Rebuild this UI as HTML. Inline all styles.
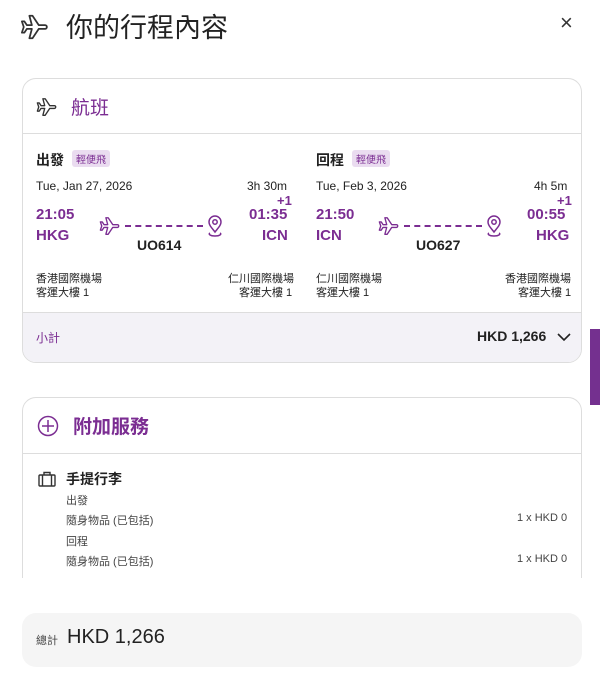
<html><head><style>
html,body{margin:0;width:600px;height:689px;overflow:hidden}
body{background:#fff;position:relative;font-family:"Liberation Sans","Noto Sans CJK TC",sans-serif;color:#222}
.a{position:absolute;white-space:nowrap}
.p{color:#7b2d92}
.card{position:absolute;left:22px;width:558px;border:1px solid #ddd;border-radius:14px;overflow:hidden;background:#fff}
.b{font-weight:bold}
</style></head><body>
<svg width="0" height="0" style="position:absolute"><defs><path id="pl" d="M20 10.5H15L10 3H7.5L9.5 10.5H5.5L3.5 7.5H1.5L3 12L1.5 16.5H3.5L5.5 13.5H9.5L7.5 21H10L15 13.5H20A1.5 1.5 0 0 0 20 10.5Z"/></defs></svg>
<svg class="a" style="left:20px;top:12px" width="30" height="30" viewBox="0 0 24 24" fill="none" stroke="#333" stroke-width="1.4" stroke-linejoin="round"><use href="#pl"/></svg>
<div class="a" style="left:66px;top:6px;font-size:27px;color:#222">你的行程內容</div>
<div class="a" style="left:560px;top:10px;font-size:22px;color:#333">×</div>

<div class="card" style="top:78px;height:283px">
<svg class="a" style="left:13px;top:17px" width="22" height="22" viewBox="0 0 24 24" fill="none" stroke="#333" stroke-width="1.5" stroke-linejoin="round"><use href="#pl"/></svg>
<div class="a p" style="left:48px;top:14px;font-size:19px">航班</div>
<div class="a" style="left:0;top:54px;width:558px;height:1px;background:#ddd"></div>

<div class="a b" style="left:13px;top:71px;font-size:14px">出發</div>
<div class="a" style="left:49px;top:71px;font-size:10px;background:#eadcf0;color:#7b2d92;padding:1px 4px;border-radius:3px">輕便飛</div>
<div class="a" style="left:13px;top:100px;font-size:12px">Tue, Jan 27, 2026</div>
<div class="a" style="left:224px;top:100px;font-size:12px">3h 30m</div>
<div class="a p b" style="left:254px;top:114px;font-size:13px">+1</div>
<div class="a p b" style="left:13px;top:127px;font-size:15px">21:05</div>
<div class="a p b" style="left:13px;top:148px;font-size:15px">HKG</div>
<div class="a p b" style="left:226px;top:127px;font-size:15px">01:35</div>
<div class="a p b" style="left:239px;top:148px;font-size:15px">ICN</div>
<svg class="a" style="left:76px;top:136px" width="22" height="22" viewBox="0 0 24 24" fill="none" stroke="#7b2d92" stroke-width="1.5" stroke-linejoin="round"><use href="#pl"/></svg>
<div class="a" style="left:102px;top:146px;width:78px;border-top:2px dashed #7b2d92"></div>
<svg class="a" style="left:183px;top:136px" width="18" height="22" viewBox="0 0 18 22" fill="none" stroke="#7b2d92" stroke-width="1.5"><path d="M9 17c-4-5-6-7-6-10a6 6 0 0112 0c0 3-2 5-6 10z"/><circle cx="9" cy="7" r="2.2"/><path d="M4 18c-2 1 0 3 5 3s7-2 5-3"/></svg>
<div class="a b" style="left:114px;top:158px;font-size:14px">UO614</div>
<div class="a" style="left:13px;top:191px;font-size:11px">香港國際機場</div>
<div class="a" style="left:13px;top:205px;font-size:11px">客運大樓 1</div>
<div class="a" style="left:205px;top:191px;font-size:11px">仁川國際機場</div>
<div class="a" style="left:216px;top:205px;font-size:11px">客運大樓 1</div>

<div class="a b" style="left:293px;top:71px;font-size:14px">回程</div>
<div class="a" style="left:329px;top:71px;font-size:10px;background:#eadcf0;color:#7b2d92;padding:1px 4px;border-radius:3px">輕便飛</div>
<div class="a" style="left:293px;top:100px;font-size:12px">Tue, Feb 3, 2026</div>
<div class="a" style="left:511px;top:100px;font-size:12px">4h 5m</div>
<div class="a p b" style="left:534px;top:114px;font-size:13px">+1</div>
<div class="a p b" style="left:293px;top:127px;font-size:15px">21:50</div>
<div class="a p b" style="left:293px;top:148px;font-size:15px">ICN</div>
<div class="a p b" style="left:504px;top:127px;font-size:15px">00:55</div>
<div class="a p b" style="left:513px;top:148px;font-size:15px">HKG</div>
<svg class="a" style="left:355px;top:136px" width="22" height="22" viewBox="0 0 24 24" fill="none" stroke="#7b2d92" stroke-width="1.5" stroke-linejoin="round"><use href="#pl"/></svg>
<div class="a" style="left:381px;top:146px;width:78px;border-top:2px dashed #7b2d92"></div>
<svg class="a" style="left:462px;top:136px" width="18" height="22" viewBox="0 0 18 22" fill="none" stroke="#7b2d92" stroke-width="1.5"><path d="M9 17c-4-5-6-7-6-10a6 6 0 0112 0c0 3-2 5-6 10z"/><circle cx="9" cy="7" r="2.2"/><path d="M4 18c-2 1 0 3 5 3s7-2 5-3"/></svg>
<div class="a b" style="left:393px;top:158px;font-size:14px">UO627</div>
<div class="a" style="left:293px;top:191px;font-size:11px">仁川國際機場</div>
<div class="a" style="left:293px;top:205px;font-size:11px">客運大樓 1</div>
<div class="a" style="left:482px;top:191px;font-size:11px">香港國際機場</div>
<div class="a" style="left:495px;top:205px;font-size:11px">客運大樓 1</div>

<div class="a" style="left:0;top:233px;width:558px;height:50px;background:#f3f2f7;border-top:1px solid #ddd"></div>
<div class="a p" style="left:13px;top:250px;font-size:12px">小計</div>
<div class="a b" style="left:454px;top:249px;font-size:14px">HKD 1,266</div>
<svg class="a" style="left:534px;top:253px" width="14" height="10" viewBox="0 0 14 10" fill="none" stroke="#222" stroke-width="1.6"><path d="M1 2l6 6 6-6"/></svg>
</div>

<div class="a" style="left:590px;top:329px;width:10px;height:76px;background:#74308f"></div>

<div class="card" style="top:397px;height:250px">
<svg class="a" style="left:14px;top:17px" width="22" height="22" viewBox="0 0 22 22" fill="none" stroke="#7b2d92" stroke-width="1.5"><circle cx="11" cy="11" r="9.5"/><path d="M11 5v12M5 11h12"/></svg>
<div class="a p b" style="left:50px;top:14px;font-size:19px">附加服務</div>
<div class="a" style="left:0;top:55px;width:558px;height:1px;background:#ddd"></div>
<svg class="a" style="left:15px;top:73px" width="18" height="16" viewBox="0 0 18 16" fill="none" stroke="#333" stroke-width="1.4"><rect x="1" y="4" width="16" height="11" rx="1"/><path d="M6 4V1.5h6V4M4.5 4v11M13.5 4v11"/></svg>
<div class="a b" style="left:43px;top:71px;font-size:14px">手提行李</div>
<div class="a" style="left:43px;top:94px;font-size:11px;color:#444">出發</div>
<div class="a" style="left:43px;top:114px;font-size:11px;color:#444">隨身物品 (已包括)</div>
<div class="a" style="left:494px;top:114px;font-size:11px;color:#444">1 x HKD 0</div>
<div class="a" style="left:43px;top:135px;font-size:11px;color:#444">回程</div>
<div class="a" style="left:43px;top:155px;font-size:11px;color:#444">隨身物品 (已包括)</div>
<div class="a" style="left:494px;top:155px;font-size:11px;color:#444">1 x HKD 0</div>
</div>
<div class="a" style="left:0;top:578px;width:600px;height:111px;background:#fff"></div>
<div class="a" style="left:22px;top:613px;width:560px;height:54px;background:#f5f5f5;border-radius:14px"></div>
<div class="a" style="left:36px;top:632px;font-size:11px;color:#444">總計</div>
<div class="a" style="left:67px;top:626px;font-size:20px">HKD 1,266</div>
</body></html>
